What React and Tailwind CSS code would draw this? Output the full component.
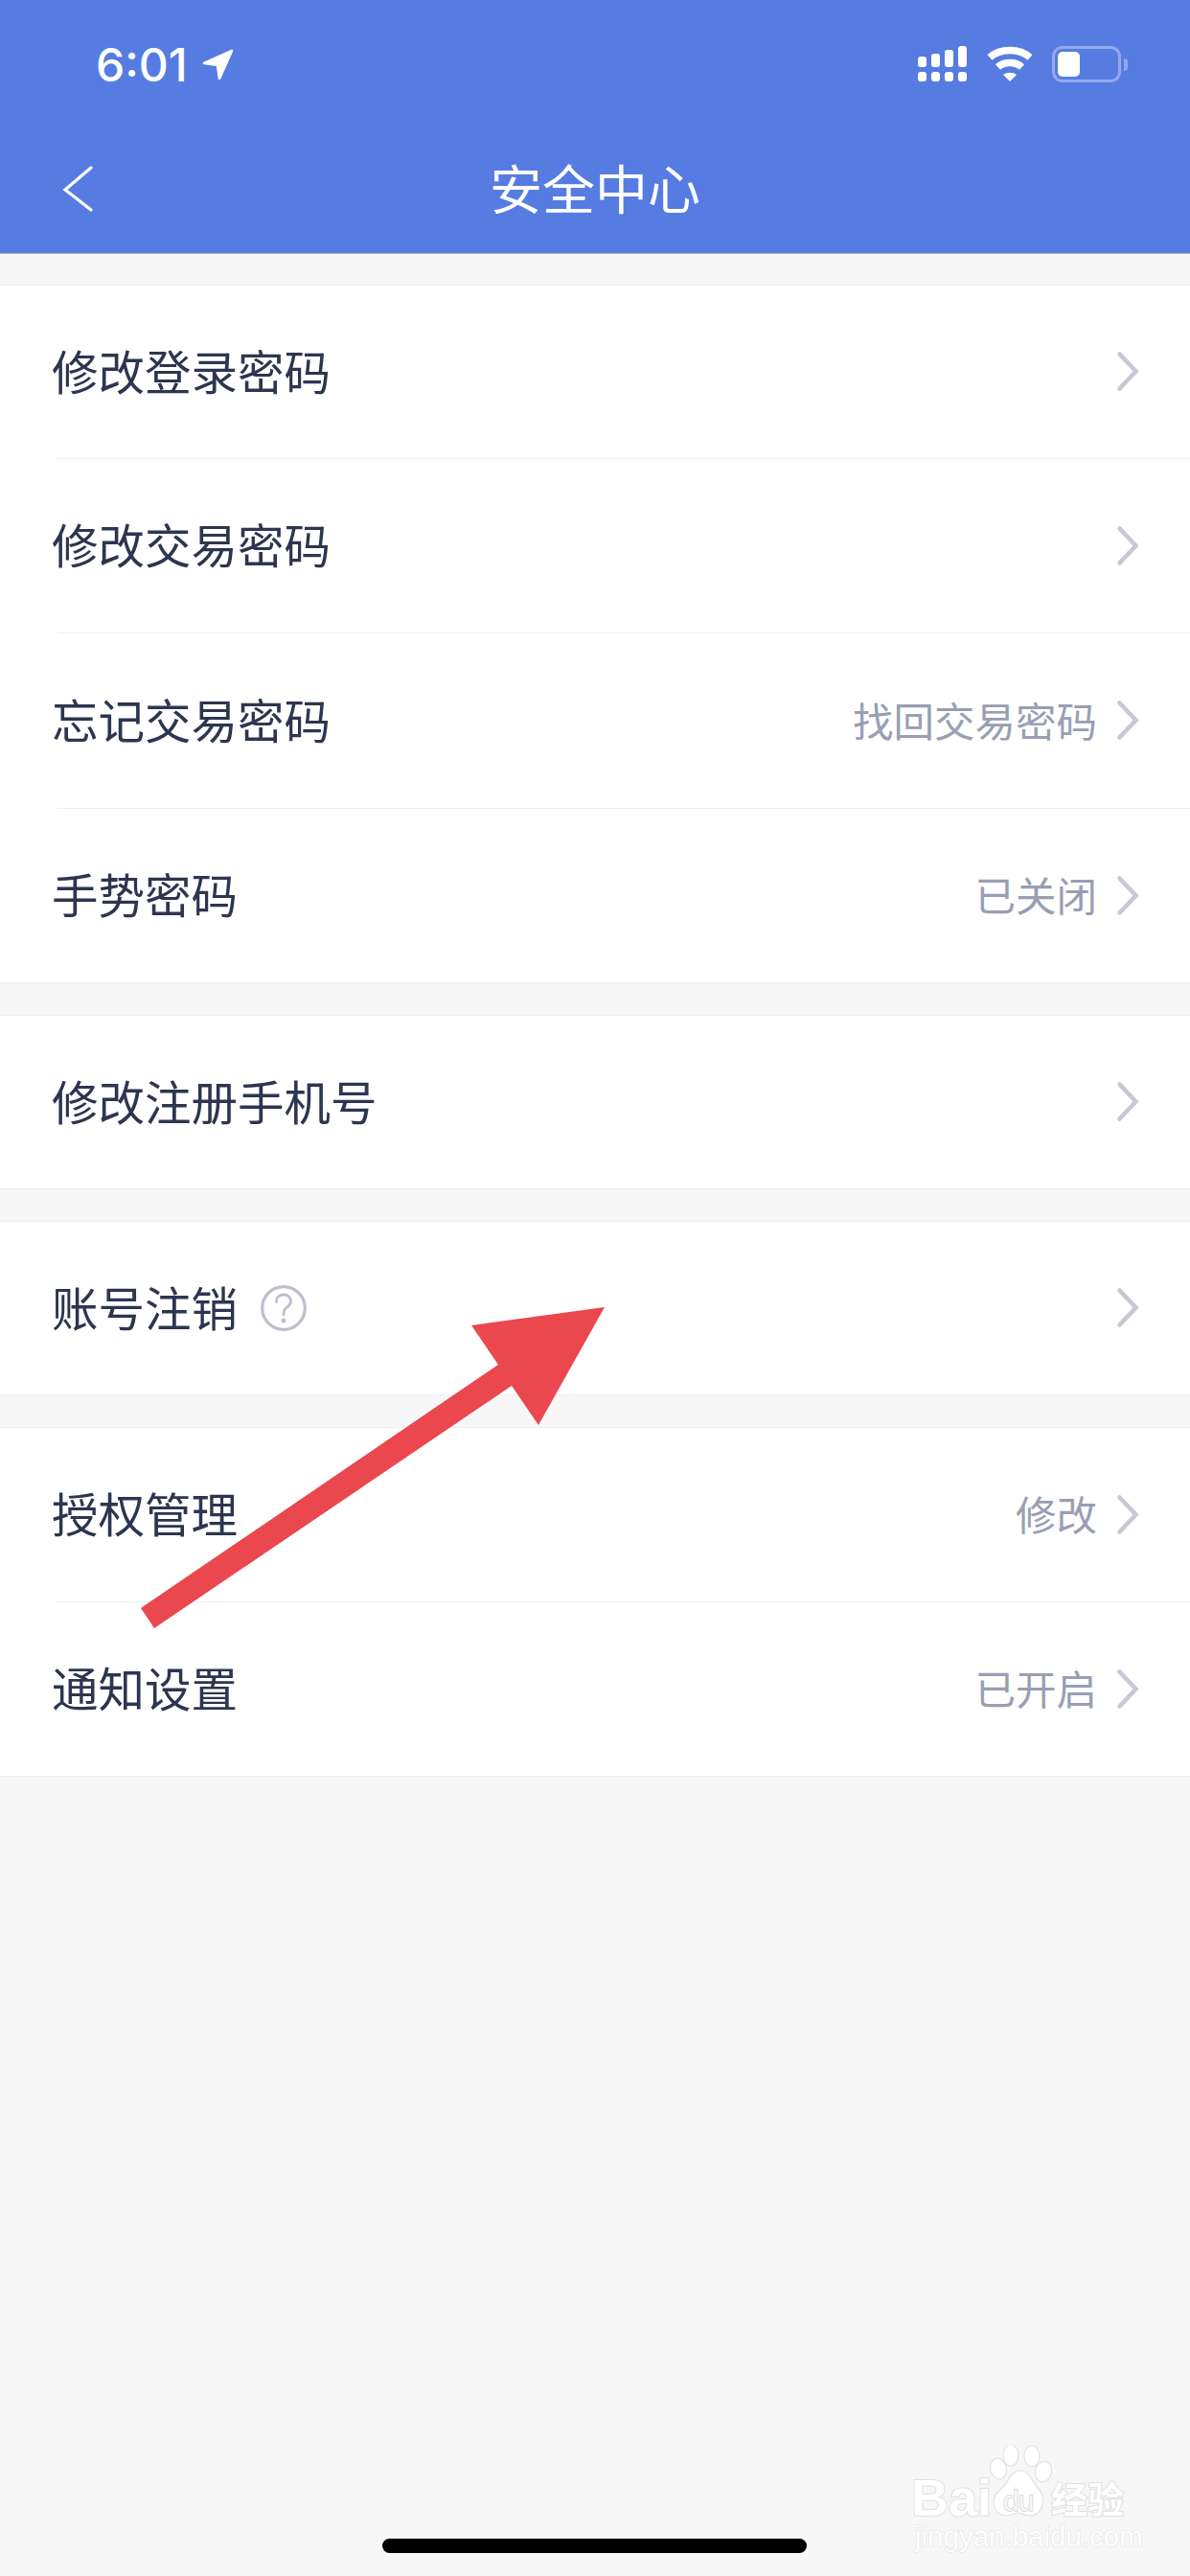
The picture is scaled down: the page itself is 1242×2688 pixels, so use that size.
const cjk = { fontFamily: '"Noto Sans CJK SC", sans-serif' };

function Chevron() {
  return (
    <svg width="26" height="44" viewBox="0 0 26 44" fill="none" className="shrink-0">
      <path d="M3.5 3.5 L20.5 21.5 L3.5 39.5" stroke="#c6c9d4" strokeWidth="4.6" strokeLinecap="round" strokeLinejoin="miter" />
    </svg>
  );
}

function HelpIcon() {
  return (
    <svg width="48" height="48" viewBox="0 0 48 48" fill="none" className="ml-[24px] shrink-0">
      <circle cx="24" cy="24" r="22.3" stroke="#bcc0cc" strokeWidth="3.2" />
      <path d="M16.5 17.5 C16.5 12.5 20 10 24 10 C28.5 10 31.5 13 31.5 17 C31.5 21 28 22.5 26 24.5 C24.5 26 24 27.5 24 31" stroke="#bcc0cc" strokeWidth="2.8" strokeLinecap="round" />
      <circle cx="24" cy="37" r="2.5" fill="#bcc0cc" />
    </svg>
  );
}

function Row({ label, value, help, h = 'h-[181px]' }) {
  return (
    <div className={`flex items-center justify-between pl-[54px] pr-[51px] ${h}`}>
      <div className="flex items-center">
        <span className="mb-[4px] text-[48.5px] leading-none text-[#2d3550]">{label}</span>
        {help && <HelpIcon />}
      </div>
      <div className="flex items-center gap-[20px]">
        {value && <span className="mb-[2px] text-[42.5px] leading-none text-[#9a9eb2]">{value}</span>}
        <Chevron />
      </div>
    </div>
  );
}

const Divider = () => <div className="ml-[60px] h-px bg-[#efefef]" />;

function Group({ children, className = '' }) {
  return <section className={`border-y border-[#efefef] bg-white ${className}`}>{children}</section>;
}

function StatusBar() {
  return (
    <div className="flex h-[130px] items-start pl-[100px] pr-[65px] pt-[48px]">
      <div className="flex items-start">
        <span className="text-[48px] font-medium leading-[39px] text-white" style={{ fontFamily: 'Inter, sans-serif' }}>6:01</span>
        <svg width="34" height="34" viewBox="0 0 34 34" className="ml-[15px] mt-[3px]">
          <path d="M2 15 L31 2 L18 31 L16 17 Z" fill="#fff" stroke="#fff" strokeWidth="2.6" strokeLinejoin="round" />
        </svg>
      </div>
      <div className="ml-auto flex items-start">
        <svg width="52" height="38" viewBox="0 0 52 38" fill="#fff">
          <rect x="0" y="11" width="9" height="11" rx="3" />
          <rect x="14" y="8" width="9" height="14" rx="3" />
          <rect x="28" y="4" width="9" height="18" rx="3" />
          <rect x="42" y="0" width="9" height="22" rx="3" />
          <rect x="0" y="27" width="9" height="10" rx="3" />
          <rect x="14" y="27" width="9" height="10" rx="3" />
          <rect x="28" y="27" width="9" height="10" rx="3" />
          <rect x="42" y="27" width="9" height="10" rx="3" />
        </svg>
        <svg width="48" height="38" viewBox="0 0 48 38" fill="none" className="ml-[20px]">
          <path d="M3 12 C14 2 34 2 45 12" stroke="#fff" strokeWidth="7.5" strokeLinejoin="round" />
          <path d="M11.5 22 C18 16 30 16 36.5 22" stroke="#fff" strokeWidth="7.5" />
          <path d="M17 30 C21 27 27 27 31 30 L24 37 Z" fill="#fff" />
        </svg>
        <div className="ml-[20px] flex items-center">
          <div className="flex h-[38px] w-[72px] items-center rounded-[11px] border-[3px] border-[#93a9ec] pl-[3px]">
            <div className="h-[26px] w-[23px] rounded-[5px] bg-white" />
          </div>
          <div className="ml-[3px] h-[13px] w-[4px] rounded-r-full bg-[#93a9ec]" />
        </div>
      </div>
    </div>
  );
}

function Watermark() {
  const outline = 'text-white [-webkit-text-stroke:2px_#e0e0e0] [paint-order:stroke_fill]';
  const latin = { fontFamily: '"Liberation Sans", sans-serif' };
  return (
    <div className="absolute left-[950px] top-[2552px] h-[112px] w-[232px]">
      <span className={`absolute left-[1px] top-[24px] text-[54px] font-bold leading-[60px] ${outline}`} style={latin}>Bai</span>
      <svg width="70" height="80" viewBox="0 0 70 80" className="absolute left-[80px] top-0">
        <g fill="#fff" stroke="#e2e2e2" strokeWidth="1.2">
          <ellipse cx="12" cy="24" rx="8.5" ry="11" transform="rotate(-15 12 24)" />
          <ellipse cx="25" cy="10" rx="8" ry="11" />
          <ellipse cx="47" cy="11" rx="8" ry="11" />
          <ellipse cx="59" cy="27" rx="8.5" ry="11" transform="rotate(15 59 27)" />
          <path d="M35 26 C45 26 47 38 54 45 C62 53 60 73 44 73 C38 73 36 70 33 70 C28 70 27 73 20 73 C6 73 2 55 15 45 C23 39 24 26 35 26 Z" />
        </g>
      </svg>
      <span className="absolute left-[97px] top-[38px] text-[30px] leading-[40px] tracking-[-1px] text-[#f7f7f7] [-webkit-text-stroke:1.5px_#d4d4d4] [paint-order:stroke_fill]" style={latin}>du</span>
      <span className={`absolute left-[147px] top-[32px] text-[38px] font-bold leading-[44px] ${outline}`} style={cjk}>经验</span>
      <span className="absolute left-[5px] top-[78px] whitespace-nowrap text-[29.5px] leading-[34px] text-white [-webkit-text-stroke:1.2px_#e4e4e4] [paint-order:stroke_fill]" style={latin}>jingyan.baidu.com</span>
    </div>
  );
}

export default function App() {
  return (
    <div className="relative h-[2688px] w-[1242px] overflow-hidden bg-[#f7f7f7]" style={cjk}>
      <header className="h-[265px] border-b border-[#aab0bd] bg-[#567ce2]">
        <StatusBar />
        <div className="relative flex h-[134px] items-center justify-center">
          <svg width="34" height="48" viewBox="0 0 34 48" fill="none" className="absolute left-[65px] top-[43px]">
            <path d="M30 2 L3 25 L30 46" stroke="#fff" strokeWidth="3.2" strokeLinecap="round" strokeLinejoin="miter" />
          </svg>
          <h1 className="mb-[5px] text-[55px] font-normal leading-none text-white">安全中心</h1>
        </div>
      </header>

      <Group className="mt-[32px]">
        <Row label="修改登录密码" h="h-[180px]" />
        <Divider />
        <Row label="修改交易密码" />
        <Divider />
        <Row label="忘记交易密码" value="找回交易密码" h="h-[182px]" />
        <Divider />
        <Row label="手势密码" value="已关闭" />
      </Group>

      <Group className="mt-[33px]">
        <Row label="修改注册手机号" h="h-[180px]" />
      </Group>

      <Group className="mt-[33px]">
        <Row label="账号注销" help h="h-[180px]" />
      </Group>

      <Group className="mt-[33px]">
        <Row label="授权管理" value="修改" />
        <Divider />
        <Row label="通知设置" value="已开启" h="h-[181px]" />
      </Group>

      <svg width="1242" height="2688" viewBox="0 0 1242 2688" className="pointer-events-none absolute left-0 top-0">
        <polygon points="631,1364 492,1383 520,1424 147,1678 161,1699 534,1446 562,1487" fill="#ea474e" />
      </svg>

      <Watermark />

      <div className="absolute left-[399px] top-[2649px] h-[15px] w-[443px] rounded-full bg-black" />
    </div>
  );
}
